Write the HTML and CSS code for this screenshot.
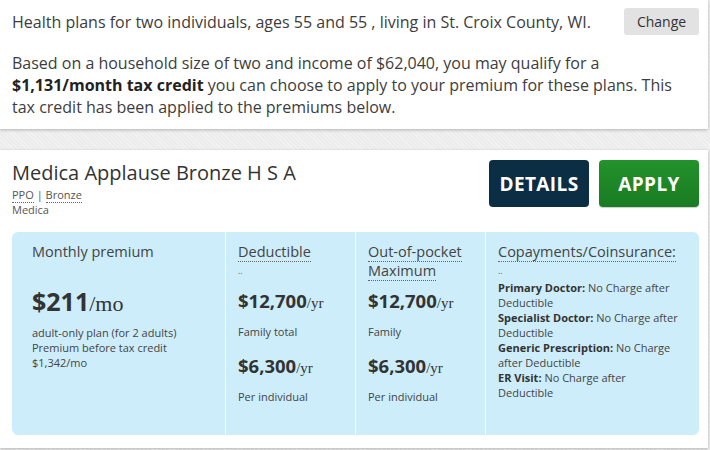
FILE: index.html
```html
<!DOCTYPE html>
<html lang="en">
<head>
<meta charset="utf-8">
<title>Health plans</title>
<link rel="stylesheet" href="styles.css">
</head>
<body>
<section class="card summary">
  <div class="summary-row">
    <p class="intro">Health plans for two individuals, ages 55 and 55 , living in St. Croix County, WI.</p>
    <button class="btn-change" type="button">Change</button>
  </div>
  <p class="credit">Based on a household size of two and income of $62,040, you may qualify for a <strong>$1,131/month tax credit</strong> you can choose to apply to your premium for these plans. This tax credit has been applied to the premiums below.</p>
</section>

<section class="card plan">
  <div class="plan-head">
    <div class="plan-id">
      <h2 class="plan-name">Medica Applause Bronze H S A</h2>
      <div class="meta"><span class="dotted">PPO</span> | <span class="dotted">Bronze</span></div>
      <div class="meta">Medica</div>
    </div>
    <div class="actions">
      <a class="btn btn-details" href="#">DETAILS</a>
      <a class="btn btn-apply" href="#">APPLY</a>
    </div>
  </div>

  <div class="costs">
    <div class="col col-premium">
      <div class="col-title plain">Monthly premium</div>
      <div class="amount big">$211<span class="unit">/mo</span></div>
      <div class="note">adult-only plan (for 2 adults)<br>Premium before tax credit<br>$1,342/mo</div>
    </div>
    <div class="col">
      <div class="col-title"><span class="dotted">Deductible</span></div>
      <div class="dots">..</div>
      <div class="amount">$12,700<span class="unit">/yr</span></div>
      <div class="note">Family total</div>
      <div class="amount second">$6,300<span class="unit">/yr</span></div>
      <div class="note">Per individual</div>
    </div>
    <div class="col">
      <div class="col-title"><span class="dotted">Out-of-pocket</span><br><span class="dotted">Maximum</span></div>
      <div class="amount">$12,700<span class="unit">/yr</span></div>
      <div class="note">Family</div>
      <div class="amount second">$6,300<span class="unit">/yr</span></div>
      <div class="note">Per individual</div>
    </div>
    <div class="col col-copay">
      <div class="col-title"><span class="dotted">Copayments/Coinsurance:</span></div>
      <div class="dots">..</div>
      <ul class="copay">
        <li><b>Primary Doctor:</b> No Charge after Deductible</li>
        <li><b>Specialist Doctor:</b> No Charge after Deductible</li>
        <li><b>Generic Prescription:</b> No Charge after Deductible</li>
        <li><b>ER Visit:</b> No Charge after Deductible</li>
      </ul>
    </div>
  </div>
</section>
</body>
</html>
```

FILE: styles.css
```css
* { box-sizing: border-box; }

html, body {
  margin: 0;
  padding: 0;
}

body {
  width: 710px;
  height: 450px;
  overflow: hidden;
  font-family: "Open Sans", "Liberation Sans", sans-serif;
  color: #333;
  background-color: #ececec;
  background-image: repeating-linear-gradient(45deg, rgba(255,255,255,0.35) 0 1px, transparent 1px 3px);
}

.card {
  width: 708px;
  background: #fff;
  box-shadow: 0 1px 3px rgba(0, 0, 0, 0.25);
}

/* ---------- summary ---------- */
.summary {
  padding: 8px 9px 11px 12px;
}

.summary-row {
  display: flex;
  align-items: center;
  justify-content: space-between;
}

.intro {
  margin: 0;
  font-size: 16px;
  line-height: 22px;
  color: #3d3d3d;
}

.btn-change {
  width: 75px;
  height: 27px;
  border: 0;
  border-radius: 3px;
  background: #e2e2e2;
  color: #333;
  font-family: inherit;
  font-size: 14px;
  padding: 0;
}

.credit {
  margin: 17px 0 0;
  padding-right: 12px;
  font-size: 16px;
  line-height: 22px;
  color: #3d3d3d;
}

.credit strong {
  color: #222;
  font-weight: 700;
}

/* ---------- plan ---------- */
.plan {
  margin-top: 21px;
  padding: 9px 9px 13px 12px;
}

.plan-head {
  display: flex;
  justify-content: space-between;
  align-items: flex-start;
}

.plan-name {
  margin: 0;
  font-size: 20px;
  font-weight: 400;
  line-height: 28px;
  color: #333;
}

.meta {
  font-size: 11px;
  line-height: 15px;
  color: #555;
}

.dotted {
  border-bottom: 1px dotted #666;
}

.actions {
  display: flex;
  gap: 10px;
  margin-top: 1px;
}

.btn {
  display: flex;
  align-items: center;
  justify-content: center;
  width: 100px;
  height: 47px;
  border-radius: 4px;
  color: #fff;
  text-decoration: none;
  font-weight: 700;
  font-size: 19px;
  letter-spacing: 0.4px;
}

.btn-details {
  background: #0b2e44;
}

.btn-apply {
  background: linear-gradient(#23922c, #1a7b22);
  box-shadow: 0 1px 1px rgba(0,0,0,0.2);
}

.costs {
  margin-top: 15px;
  display: grid;
  grid-template-columns: 213px 130px 130px 1fr;
  height: 203px;
  background: #cdedfa;
  border-radius: 6px;
}

.col {
  padding: 10px 12px 0 12px;
  border-left: 1px solid #f2fbff;
}

.col-premium {
  padding-left: 20px;
  border-left: 0;
}

.col-copay {
  padding-right: 17px;
}

.col-title {
  font-size: 14.5px;
  line-height: 19px;
  color: #444;
}

.dots {
  height: 19px;
  font-size: 9px;
  line-height: 19px;
  color: #666;
}

.amount {
  margin-top: 8px;
  font-size: 18.5px;
  font-weight: 700;
  line-height: 26px;
  color: #333;
}

.amount .unit {
  font-family: "Liberation Serif", serif;
  font-weight: 400;
  font-size: 15px;
}

.amount.big {
  margin-top: 27px;
  font-size: 25px;
}

.amount.big .unit {
  font-size: 22px;
}

.amount.second {
  margin-top: 14px;
}

.note {
  margin-top: 8px;
  font-size: 11px;
  line-height: 15px;
  color: #444;
}

.copay {
  list-style: none;
  margin: 0;
  padding: 0;
  font-size: 11px;
  line-height: 15px;
  color: #444;
}

.copay b {
  color: #333;
}
```
